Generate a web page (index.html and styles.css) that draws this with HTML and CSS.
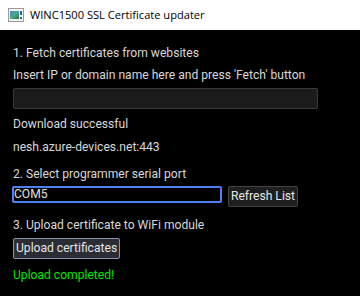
FILE: index.html
```html
<!DOCTYPE html>
<html>
<head>
<meta charset="utf-8">
<link rel="stylesheet" href="styles.css">
</head>
<body>
<div class="titlebar">
  <svg class="appicon" width="16" height="14" viewBox="0 0 16 14">
    <rect x="0.5" y="0.5" width="15" height="13" fill="#f4f4f4" stroke="#9a9a9a"/>
    <defs>
      <linearGradient id="g" x1="0" y1="0" x2="1" y2="1">
        <stop offset="0" stop-color="#3a8fd0"/>
        <stop offset="0.5" stop-color="#4aa890"/>
        <stop offset="1" stop-color="#2f6f3a"/>
      </linearGradient>
    </defs>
    <rect x="2" y="3" width="9" height="8" fill="url(#g)"/>
    <rect x="12" y="3" width="2" height="4" fill="#2a5fb0"/>
    <rect x="12" y="9" width="2" height="2" fill="#2a5fb0"/>
  </svg>
  <span class="title">WINC1500 SSL Certificate updater</span>
</div>
<div class="content">
  <div class="label step1">1. Fetch certificates from websites</div>
  <div class="label insert">Insert IP or domain name here and press 'Fetch' button</div>
  <div class="input"></div>
  <div class="label">Download successful</div>
  <div class="label host">nesh.azure-devices.net:443</div>
  <div class="label step2">2. Select programmer serial port</div>
  <div class="row">
    <div class="combo">COM5</div>
    <div class="btn">Refresh List</div>
  </div>
  <div class="label step3">3. Upload certificate to WiFi module</div>
  <div class="btn focus">Upload certificates</div>
  <div class="label ok">Upload completed!</div>
</div>
</body>
</html>
```
FILE: styles.css
```css
html, body {
  margin: 0;
  padding: 0;
  background: #000;
  width: 360px;
  height: 296px;
  overflow: hidden;
}
.titlebar {
  height: 30px;
  background: #fff;
  display: flex;
  align-items: center;
  padding-left: 8px;
  box-sizing: border-box;
}
.appicon {
  display: block;
  margin-right: 6px;
  margin-top: -1px;
}
.title {
  font-family: "Open Sans", "Noto Sans", sans-serif;
  font-size: 11.1px;
  color: #000;
  margin-top: -1px;
}
.content {
  padding: 16px 13px 0 13px;
  display: flex;
  flex-direction: column;
  align-items: flex-start;
  font-family: Roboto, sans-serif;
  font-size: 12.1px;
  color: #d8d8d8;
}
.label {
  height: 15px;
  line-height: 15px;
  margin-bottom: 8px;
}
.label.step1 {
  margin-bottom: 7px;
}
.label.insert {
  margin-bottom: 6px;
}
.label.host {
  margin-bottom: 12px;
}
.label.step2 {
  margin-bottom: 4px;
}
.label.step3 {
  margin-bottom: 5px;
}
.input {
  width: 305px;
  height: 21px;
  box-sizing: border-box;
  background: #1b1b1b;
  border: 1px solid #3a3a3a;
  border-radius: 2px;
  margin-bottom: 8px;
  margin-top: -1px;
}
.row {
  display: flex;
  align-items: flex-start;
  gap: 6px;
  margin-bottom: 11px;
  margin-left: -1px;
}
.combo {
  width: 210px;
  height: 17px;
  box-sizing: border-box;
  border: 2px solid #4f7ff0;
  border-radius: 2px;
  line-height: 13px;
  padding-left: 0;
  color: #e0e0e0;
}
.btn {
  height: 21px;
  box-sizing: border-box;
  background: #1e1e1e;
  border: 1px solid #444;
  border-radius: 2px;
  padding: 0 2px;
  line-height: 19px;
  color: #e6e6e6;
  white-space: nowrap;
}
.btn.focus {
  border-color: #8a93a8;
  background: #2a2d33;
  margin-bottom: 9px;
}
.ok {
  color: #00e600;
}
```
